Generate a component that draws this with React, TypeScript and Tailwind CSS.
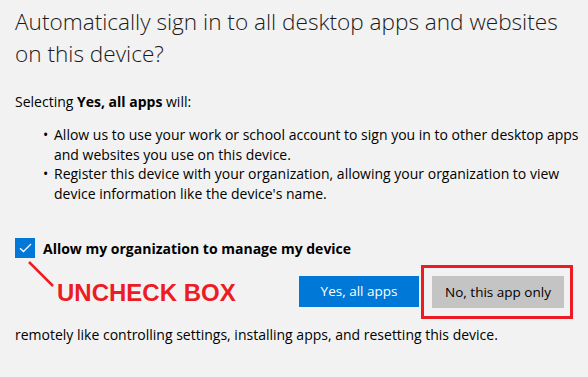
import React from 'react';

const App = () => {
  return (
    <div className="w-[588px] h-[377px] overflow-hidden bg-[#f2f2f2] text-black font-['Open_Sans',sans-serif]">
      <div className="pl-[15px] pt-[6px]">
        <h1 className="max-w-[560px] text-[22.6px] leading-[32px] font-light text-[#1a1a1a]">
          Automatically sign in to all desktop apps and websites on this device?
        </h1>

        <p className="mt-[22px] text-[14px] leading-[20px]">
          Selecting <span className="font-bold">Yes, all apps</span> will:
        </p>

        <ul className="mt-[13px] pl-[28px] text-[14px] leading-[19.7px]">
          <li className="flex">
            <span className="w-[11px] shrink-0">•</span>
            <span>Allow us to use your work or school account to sign you in to other desktop apps and websites you use on this device.</span>
          </li>
          <li className="flex">
            <span className="w-[11px] shrink-0">•</span>
            <span>Register this device with your organization, allowing your organization to view device information like the device's name.</span>
          </li>
        </ul>

        {/* checkbox row */}
        <div className="mt-[34px] flex items-center gap-[8px] relative">
          <div className="w-[20px] h-[20px] bg-[#0078d7] flex items-center justify-center">
            <svg width="13" height="10" viewBox="0 0 13 10" fill="none">
              <path d="M1 5.2L4.5 8.5L12 1" stroke="white" strokeWidth="1.3" />
            </svg>
          </div>
          <span className="text-[14px] font-bold">Allow my organization to manage my device</span>
          <svg className="absolute left-[12px] top-[22px]" width="30" height="30" viewBox="0 0 30 30">
            <line x1="2" y1="2" x2="26" y2="26" stroke="#ed1c24" strokeWidth="2.5" />
          </svg>
        </div>

        <div className="mt-[17px] flex items-start">
          <div className="w-[284px] pl-[42px] pt-[4px] text-[24px] leading-[26px] font-bold text-[#ed1c24] font-['Liberation_Sans',sans-serif]">
            UNCHECK BOX
          </div>
          <button className="w-[120px] h-[31px] bg-[#0078d7] text-white text-[13.5px]">Yes, all apps</button>
          <div className="ml-[2px] -mt-[11px] border-[3px] border-[#ed1c24] p-[8px] pr-[6px] pb-[8px]">
            <button className="w-[132px] h-[32px] bg-[#c4c4c4] text-black text-[13.5px] block">No, this app only</button>
          </div>
        </div>

        <p className="mt-[6px] text-[14px] leading-[20px]">
          remotely like controlling settings, installing apps, and resetting this device.
        </p>
      </div>
    </div>
  );
};

export default App;
